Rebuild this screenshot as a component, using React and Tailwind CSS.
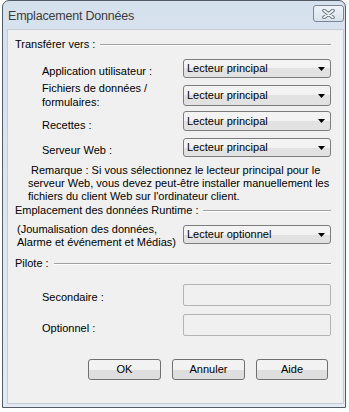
import React from "react";

const font = { fontFamily: '"Liberation Sans", Arial, sans-serif' };

function Combo({ value, className = "" }) {
  return (
    <div
      className={`w-[148px] h-[19px] rounded-[3px] border border-[#7d7d7d] bg-gradient-to-b from-[#f3f3f3] from-50% to-[#e2e2e2] to-50% flex items-center justify-between pl-[3px] pr-[5px] text-[11px] text-black ${className}`}
    >
      <span>{value}</span>
      <svg width="7" height="4" viewBox="0 0 7 4">
        <path d="M0 0h7L3.5 4z" fill="#000" />
      </svg>
    </div>
  );
}

function GroupHeader({ label, className = "" }) {
  return (
    <div className={`flex items-center h-[14px] pl-[7px] pr-[12px] ${className}`}>
      <span className="leading-[14px] whitespace-nowrap">{label}</span>
      <div className="flex-1 ml-[5px] mt-[2px] border-t border-[#a0a0a0] border-b border-b-white" />
    </div>
  );
}

function Btn({ children, w = "w-[73px]" }) {
  return (
    <div
      className={`${w} h-[21px] rounded-[3px] border border-[#707070] bg-gradient-to-b from-[#f2f2f2] from-50% to-[#dedede] to-50% flex items-center justify-center text-[11px]`}
    >
      {children}
    </div>
  );
}

export default function App() {
  return (
    <div className="w-[349px] h-[412px] bg-white overflow-hidden" style={font}>
      <div className="ml-[2px] w-[344px] h-[408px] border border-[#525b66] rounded-t-[7px] bg-gradient-to-b from-[#d6e1ee] to-[#e3eaf3] flex flex-col">
        {/* title bar */}
        <div className="h-[28px] flex items-start justify-between pl-[5px] pr-[1px] shrink-0">
          <span className="mt-[6px] text-[12.5px] text-[#3c3c3c] tracking-[-0.2px]">Emplacement Données</span>
          <div className="mt-[4px] w-[31px] h-[17px] rounded-[3px] border border-[#7b8796] bg-gradient-to-b from-[#eef3f8] to-[#d9e2ec] flex items-center justify-center">
            <svg width="13" height="10" viewBox="0 0 13 10">
              <path d="M2 1.5l9 7M11 1.5l-9 7" stroke="#6e7782" strokeWidth="3.6" strokeLinecap="round" />
              <path d="M2 1.5l9 7M11 1.5l-9 7" stroke="#f4f6f8" strokeWidth="1.6" strokeLinecap="round" />
            </svg>
          </div>
        </div>

        {/* client area */}
        <div className="ml-[4px] mr-[1px] mb-[3px] flex-1 border border-[#c3ccd6] bg-[#f0f0f0] text-[11px] text-black flex flex-col">
          <GroupHeader label="Transférer vers :" className="mt-[7px]" />

          <div className="flex mt-[8px] pl-[34px]">
            <div className="w-[141px] mt-[5px] leading-[14px]">Application utilisateur :</div>
            <Combo value="Lecteur principal" />
          </div>

          <div className="flex mt-[3px] pl-[34px]">
            <div className="w-[141px] leading-[14px]">
              Fichiers de données /<br />formulaires:
            </div>
            <Combo value="Lecteur principal" className="mt-[4px] h-[21px]" />
          </div>

          <div className="flex mt-[2px] pl-[34px]">
            <div className="w-[141px] mt-[7px] leading-[14px]">Recettes :</div>
            <Combo value="Lecteur principal" className="h-[20px]" />
          </div>

          <div className="flex mt-[6px] pl-[34px]">
            <div className="w-[141px] mt-[5px] leading-[14px]">Serveur Web :</div>
            <Combo value="Lecteur principal" />
          </div>

          <div className="mt-[7px] pl-[20px] leading-[13px] whitespace-nowrap">
            &nbsp;Remarque : Si vous sélectionnez le lecteur principal pour le
            <br />
            serveur Web, vous devez peut-être installer manuellement les
            <br />
            fichiers du client Web sur l'ordinateur client.
          </div>

          <GroupHeader label="Emplacement des données Runtime :" />

          <div className="flex mt-[6px] pl-[9px]">
            <div className="w-[166px] leading-[13px] whitespace-nowrap">
              (Joumalisation des données,
              <br />
              Alarme et événement et Médias)
            </div>
            <Combo value="Lecteur optionnel" className="mt-[2px]" />
          </div>

          <GroupHeader label="Pilote :" className="mt-[7px]" />

          <div className="flex mt-[14px] pl-[34px]">
            <div className="w-[141px] mt-[6px] leading-[14px]">Secondaire :</div>
            <div className="w-[148px] h-[22px] rounded-[2px] border border-[#b4b4b4] bg-[#f0f0f0]" />
          </div>

          <div className="flex mt-[8px] pl-[34px]">
            <div className="w-[141px] mt-[7px] leading-[14px]">Optionnel :</div>
            <div className="w-[148px] h-[22px] rounded-[2px] border border-[#b4b4b4] bg-[#f0f0f0]" />
          </div>

          <div className="flex mt-[23px] pl-[80px] gap-[11px]">
            <Btn>OK</Btn>
            <Btn>Annuler</Btn>
            <Btn w="w-[72px]">Aide</Btn>
          </div>
        </div>
      </div>
    </div>
  );
}
